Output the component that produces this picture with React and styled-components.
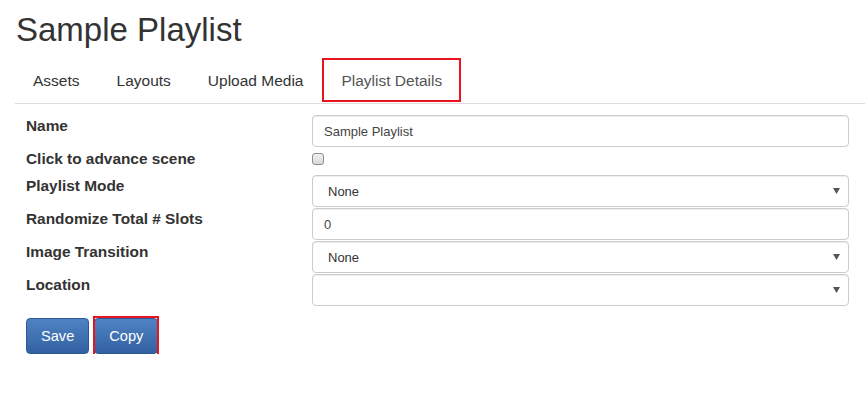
import React from "react"
import styled, { createGlobalStyle } from "styled-components"

const GlobalStyle = createGlobalStyle`
body {
  margin: 0;
  background: #fff;
  font-family: "Liberation Sans", Arial, sans-serif;
  color: #333;
}
`

const Page = styled.div`
padding: 0 16px 0 15px;
overflow: hidden;
`

const Title = styled.h1`
margin: 12px 0 10px 1px;
font-size: 33px;
font-weight: 400;
line-height: 36px;
color: #333;
`

const Tabs = styled.ul`
display: flex;
align-items: flex-start;
list-style: none;
margin: 0 -16px 0 0;
padding: 0;
height: 45px;
border-bottom: 1px solid #ddd;
`

const Tab = styled.li`
box-sizing: border-box;
height: 44px;
display: flex;
align-items: center;
padding: ${p => (p.$active ? "1px 17px 0" : "1px 18px 0")};
margin-right: ${p => (p.$active ? "0" : "1px")};
font-size: 15.5px;
line-height: 21px;
color: ${p => (p.$active ? "#555" : "#333")};
border: ${p => (p.$active ? "2px solid #e8141f" : "none")};
cursor: pointer;
`

const Form = styled.form`
display: grid;
grid-template-columns: 286px 1fr;
row-gap: 1px;
padding: 11px 0 0 11px;
`

const Label = styled.label`
align-self: start;
font-size: 15.4px;
font-weight: 700;
line-height: 21px;
color: #333;
`

const CheckRow = styled.div`
height: 26px;
`

const Checkbox = styled.input`
appearance: none;
box-sizing: border-box;
display: block;
width: 12px;
height: 12px;
margin: 5px 0 0 0;
border: 1px solid #8e8e8e;
border-radius: 3px;
background: linear-gradient(#f0f0f0, #d8d8d8);
`

const TextInput = styled.input`
box-sizing: border-box;
width: 100%;
height: 32px;
padding: 0 11px;
border: 1px solid #ccc;
border-radius: 4px;
box-shadow: inset 0 1px 1px rgba(0, 0, 0, 0.075);
font-family: "Liberation Sans", Arial, sans-serif;
font-size: 13px;
color: #444;
outline: none;
`

const SelectWrap = styled.div`
position: relative;
height: 32px;
`

const Select = styled.select`
appearance: none;
box-sizing: border-box;
width: 100%;
height: 32px;
padding: 0 15px;
border: 1px solid #ccc;
border-radius: 4px;
box-shadow: inset 0 1px 1px rgba(0, 0, 0, 0.075);
background: #fff;
font-family: "Liberation Sans", Arial, sans-serif;
font-size: 13px;
color: #333;
outline: none;
`

const Arrow = styled.svg`
position: absolute;
right: 9px;
top: 13px;
pointer-events: none;
`

const Buttons = styled.div`
grid-column: 1 / 3;
display: flex;
gap: 5px;
margin-top: 11px;
`

const Button = styled.button`
position: relative;
box-sizing: border-box;
height: 36px;
padding: 0 14px;
border: 1px solid #2b5a94;
border-radius: 4px;
background: linear-gradient(#4f83c4, #3261a0);
color: #fff;
font-family: "Liberation Sans", Arial, sans-serif;
font-size: 14.6px;
cursor: pointer;

&::after {
  content: "";
  display: ${p => (p.$marked ? "block" : "none")};
  position: absolute;
  inset: -3px -2px -3px -2px;
  border: 2.5px solid #e8141f;
}
`

function Dropdown({ value }) {
  return (
    <SelectWrap>
      <Select defaultValue={value}>
        <option value={value}>{value}</option>
      </Select>
      <Arrow width="7" height="6" viewBox="0 0 7 6">
        <path d="M0 0 L7 0 L3.5 6 Z" fill="#555" />
      </Arrow>
    </SelectWrap>
  )
}

export default function App() {
  return (
    <Page>
      <GlobalStyle />
      <Title>Sample Playlist</Title>
      <Tabs>
        <Tab>Assets</Tab>
        <Tab>Layouts</Tab>
        <Tab>Upload Media</Tab>
        <Tab $active>Playlist Details</Tab>
      </Tabs>
      <Form onSubmit={e => e.preventDefault()}>
        <Label>Name</Label>
        <TextInput type="text" defaultValue="Sample Playlist" />

        <Label>Click to advance scene</Label>
        <CheckRow>
          <Checkbox type="checkbox" />
        </CheckRow>

        <Label>Playlist Mode</Label>
        <Dropdown value="None" />

        <Label>Randomize Total # Slots</Label>
        <TextInput type="text" defaultValue="0" />

        <Label>Image Transition</Label>
        <Dropdown value="None" />

        <Label>Location</Label>
        <Dropdown value="" />

        <Buttons>
          <Button type="button">Save</Button>
          <Button type="button" $marked>Copy</Button>
        </Buttons>
      </Form>
    </Page>
  )
}
